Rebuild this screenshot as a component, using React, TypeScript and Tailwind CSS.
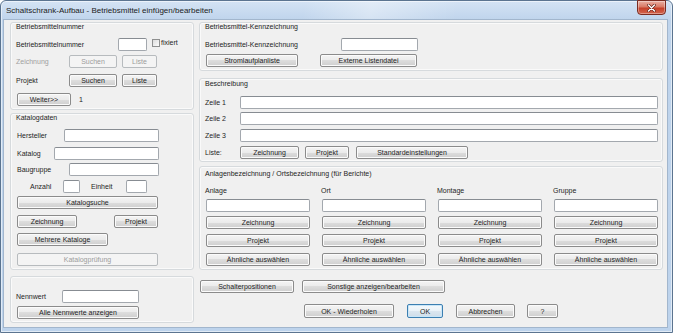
import type { ReactNode } from "react";

type BtnProps = {
  className?: string;
  disabled?: boolean;
  isDefault?: boolean;
  tall?: boolean;
  children: ReactNode;
};

function Btn({ className = "", disabled = false, isDefault = false, tall = false, children }: BtnProps) {
  const size = tall ? "h-[14px]" : "h-[13px]";
  const look = disabled
    ? "border-[#b7bbbe] bg-[#f4f4f4] text-[#9c9c9c]"
    : isDefault
      ? "border-[#3c7fb1] bg-[linear-gradient(#f4f9fc,#eaf2f8_50%,#dce7f0_50%,#cfdde9)] text-[#1e1e1e] shadow-[inset_0_0_0_1px_#c9e6f8]"
      : "border-[#8b8b8b] bg-[linear-gradient(#f4f4f4,#ebebeb_50%,#dddddd_50%,#cfcfcf)] text-[#1e1e1e] shadow-[inset_0_0_0_1px_#fbfbfb]";
  return (
    <div
      className={`flex shrink-0 items-center justify-center whitespace-nowrap rounded-[2px] border text-[7px] leading-none ${size} ${look} ${className}`}
    >
      {children}
    </div>
  );
}

function Field({ className = "" }: { className?: string }) {
  return (
    <div
      className={`h-[13px] shrink-0 rounded-[2px] border border-[#a3a8ae] border-t-[#878c92] bg-white ${className}`}
    />
  );
}

function Group({ className = "", children }: { className?: string; children?: ReactNode }) {
  return (
    <div
      className={`flex w-full flex-col rounded-[3px] border border-[#d6dadd] shadow-[inset_0_0_0_1px_#fafafa] ${className}`}
    >
      {children}
    </div>
  );
}

function Cap({ className = "", children }: { className?: string; children: ReactNode }) {
  return <div className={`h-[8px] text-[7px] leading-[8px] ${className}`}>{children}</div>;
}

const cols = ["Anlage", "Ort", "Montage", "Gruppe"];

export default function App() {
  return (
    <div className="h-[333px] w-[673px] overflow-hidden bg-white">
      <div className="flex h-[333px] w-[673px] flex-col rounded-t-[6px] border border-[#5b7490] bg-[linear-gradient(180deg,#d4e3f4,#bfd4ec_19px,#bdd3ec)] font-['Liberation_Sans',Arial,sans-serif] text-[#1e1e1e] shadow-[inset_0_0_0_1px_rgba(255,255,255,0.55)]">
        {/* title bar */}
        <div className="flex h-[19px] shrink-0 items-start bg-[linear-gradient(100deg,transparent_45%,rgba(255,255,255,0.35)_55%,transparent_68%)]">
          <span className="ml-[5px] mt-[5px] text-[8px] leading-[9px] text-[#1b1b1b]">
            Schaltschrank-Aufbau - Betriebsmittel einfügen/bearbeiten
          </span>
          <div className="-mt-px ml-auto mr-[6px] flex h-[15px] w-[29px] items-center justify-center rounded-b-[4px] border border-[#7a2b20] bg-[linear-gradient(#eab0a3,#d97a66_45%,#c6412a_55%,#d2654e)] shadow-[inset_0_0_0_1px_rgba(255,255,255,0.35)]">
            <svg width="9" height="8" viewBox="0 0 9 8">
              <path d="M1.5 1 L7.5 7 M7.5 1 L1.5 7" stroke="#5b1b12" strokeWidth="2.6" strokeLinecap="round" />
              <path d="M1.5 1 L7.5 7 M7.5 1 L1.5 7" stroke="#ffffff" strokeWidth="1.5" strokeLinecap="round" />
            </svg>
          </div>
        </div>

        {/* client area */}
        <div className="ml-[3px] flex h-[307px] w-[663px] bg-[#f0f0f0] pl-[6px] pt-[2px] text-[7px] leading-[8px] shadow-[0_0_0_1px_#a2b6cd]">
          {/* left column */}
          <div className="flex w-[184px] shrink-0 flex-col">
            <Group className="h-[88px]">
              <Cap className="pl-[5px]">Betriebsmittelnummer</Cap>
              <div className="mt-[7px] flex h-[13px] items-center pl-[5px]">
                <span className="w-[102px] shrink-0">Betriebsmittelnummer</span>
                <Field className="w-[29px]" />
                <div className="ml-[5px] flex items-start self-start pt-[1px]">
                  <div className="h-[8px] w-[8px] border border-[#8e8f8f] bg-[linear-gradient(135deg,#dcdcdc,#fbfbfb)]" />
                  <span className="ml-[1px] leading-[7px]">fixiert</span>
                </div>
              </div>
              <div className="mt-[4px] flex h-[13px] items-center pl-[5px]">
                <span className="w-[53px] shrink-0 text-[#a0a0a0]">Zeichnung</span>
                <Btn disabled className="w-[48px]">Suchen</Btn>
                <Btn disabled className="ml-[5px] w-[35px]">Liste</Btn>
              </div>
              <div className="mt-[6px] flex h-[13px] items-center pl-[5px]">
                <span className="w-[53px] shrink-0">Projekt</span>
                <Btn className="w-[48px]">Suchen</Btn>
                <Btn className="ml-[5px] w-[35px]">Liste</Btn>
              </div>
              <div className="mt-[6px] flex h-[13px] items-center pl-[6px]">
                <Btn className="w-[54px]">Weiter&gt;&gt;</Btn>
                <span className="ml-[8px]">1</span>
              </div>
            </Group>

            <Group className="mt-[3px] h-[157px]">
              <Cap className="pl-[5px]">Katalogdaten</Cap>
              <div className="mt-[7px] flex h-[13px] items-center pl-[6px]">
                <span className="w-[47px] shrink-0">Hersteller</span>
                <Field className="w-[95px]" />
              </div>
              <div className="mt-[5px] flex h-[13px] items-center pl-[6px]">
                <span className="w-[37px] shrink-0">Katalog</span>
                <Field className="w-[105px]" />
              </div>
              <div className="mt-[3px] flex h-[13px] items-center pl-[6px]">
                <span className="w-[52px] shrink-0">Baugruppe</span>
                <Field className="w-[90px]" />
              </div>
              <div className="mt-[4px] flex h-[13px] items-center pl-[19px]">
                <span className="w-[33px] shrink-0">Anzahl</span>
                <Field className="w-[17px]" />
                <span className="ml-[11px] w-[35px] shrink-0">Einheit</span>
                <Field className="w-[21px]" />
              </div>
              <div className="mt-[3px] flex pl-[6px]">
                <Btn className="w-[141px]">Katalogsuche</Btn>
              </div>
              <div className="mt-[6px] flex pl-[6px]">
                <Btn className="w-[60px]">Zeichnung</Btn>
                <Btn className="ml-[37px] w-[44px]">Projekt</Btn>
              </div>
              <div className="mt-[5px] flex pl-[6px]">
                <Btn className="w-[91px]">Mehrere Kataloge</Btn>
              </div>
              <div className="mt-[7px] flex pl-[6px]">
                <Btn disabled className="w-[141px]">Katalogprüfung</Btn>
              </div>
            </Group>

            <Group className="mt-[6px] h-[47px]">
              <div className="mt-[13px] flex h-[13px] items-center pl-[5px]">
                <span className="w-[46px] shrink-0">Nennwert</span>
                <Field className="w-[77px]" />
              </div>
              <div className="mt-[3px] flex pl-[6px]">
                <Btn className="w-[122px]">Alle Nennwerte anzeigen</Btn>
              </div>
            </Group>
          </div>

          {/* right column */}
          <div className="ml-[5px] flex w-[464px] shrink-0 flex-col">
            <Group className="h-[49px]">
              <Cap className="pl-[5px]">Betriebsmittel-Kennzeichnung</Cap>
              <div className="mt-[7px] flex h-[13px] items-center pl-[5px]">
                <span className="w-[136px] shrink-0">Betriebsmittel-Kennzeichnung</span>
                <Field className="w-[77px]" />
              </div>
              <div className="mt-[3px] flex pl-[6px]">
                <Btn className="w-[92px]">Stromlaufplanliste</Btn>
                <Btn className="ml-[22px] w-[97px]">Externe Listendatei</Btn>
              </div>
            </Group>

            <Group className="mt-[7px] h-[84px]">
              <Cap className="mt-[1px] pl-[5px]">Beschreibung</Cap>
              {["Zeile 1", "Zeile 2", "Zeile 3"].map((z, i) => (
                <div
                  key={z}
                  className={`flex h-[13px] items-center pl-[5px] pr-[4px] ${i === 0 ? "mt-[8px]" : i === 1 ? "mt-[3px]" : "mt-[4px]"}`}
                >
                  <span className="w-[35px] shrink-0">{z}</span>
                  <Field className="flex-1" />
                </div>
              ))}
              <div className="mt-[4px] flex h-[13px] items-center pl-[5px]">
                <span className="w-[35px] shrink-0">Liste:</span>
                <Btn className="w-[59px]">Zeichnung</Btn>
                <Btn className="ml-[6px] w-[44px]">Projekt</Btn>
                <Btn className="ml-[7px] w-[112px]">Standardeinstellungen</Btn>
              </div>
            </Group>

            <Group className="mt-[4px] h-[104px]">
              <Cap className="mt-[3px] pl-[5px]">Anlagenbezeichnung / Ortsbezeichnung (für Berichte)</Cap>
              <div className="mt-[9px] flex gap-[12px] pl-[6px]">
                {cols.map((c) => (
                  <div key={c} className="flex w-[104px] flex-col">
                    <div className="-ml-px h-[8px] leading-[8px]">{c}</div>
                    <Field className="mt-[4px] w-full" />
                    <Btn className="mt-[4px] w-full">Zeichnung</Btn>
                    <Btn className="mt-[5px] w-full">Projekt</Btn>
                    <Btn className="mt-[6px] w-full">Ähnliche auswählen</Btn>
                  </div>
                ))}
              </div>
            </Group>

            <div className="mt-[10px] flex pl-[1px]">
              <Btn className="w-[94px]">Schalterpositionen</Btn>
              <Btn className="ml-[8px] w-[143px]">Sonstige anzeigen/bearbeiten</Btn>
            </div>
            <div className="mt-[11px] flex pl-[105px]">
              <Btn tall className="w-[90px]">OK - Wiederholen</Btn>
              <Btn tall isDefault className="ml-[13px] w-[36px]">OK</Btn>
              <Btn tall className="ml-[13px] w-[59px]">Abbrechen</Btn>
              <Btn tall className="ml-[12px] w-[31px]">?</Btn>
            </div>
          </div>
        </div>
      </div>
    </div>
  );
}
